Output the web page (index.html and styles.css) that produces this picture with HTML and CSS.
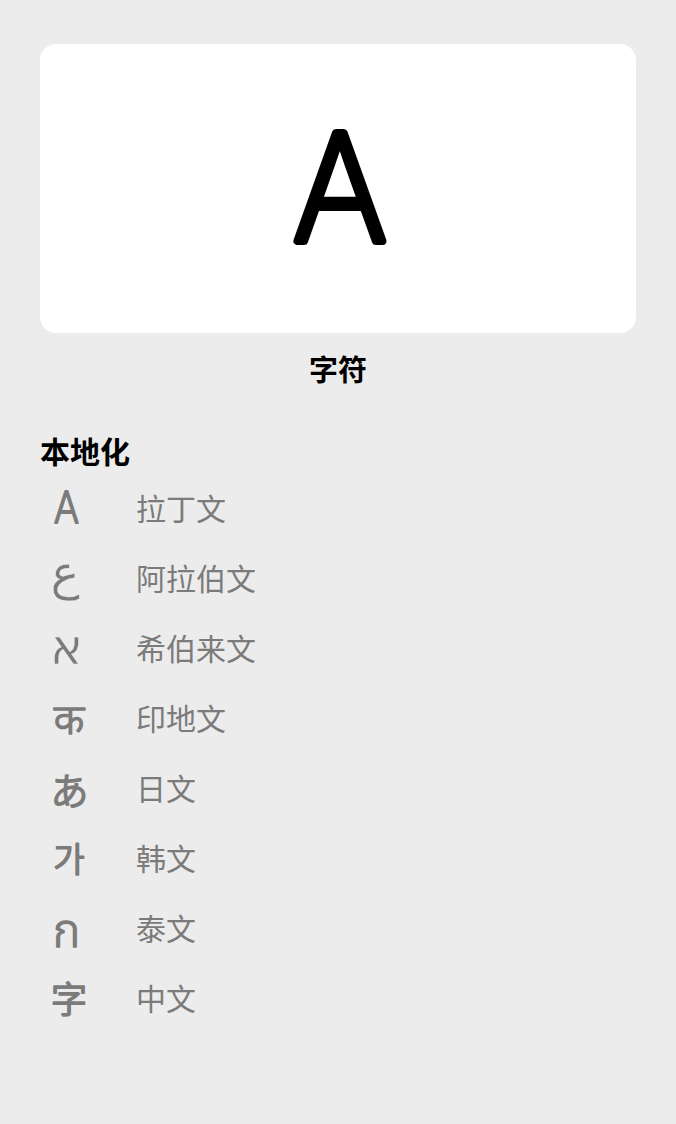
FILE: index.html
```html
<!DOCTYPE html>
<html lang="zh">
<head>
<meta charset="utf-8">
<link rel="stylesheet" href="styles.css">
</head>
<body>
<div class="page">
  <div class="card">
    <svg class="big" width="596" height="289" viewBox="0 0 596 289">
      <text transform="translate(300 196.5) scale(0.96 1)" text-anchor="middle" class="bigtext">A</text>
    </svg>
  </div>
  <div class="caption">字符</div>
  <div class="section">本地化</div>
  <ul class="list">
    <li class="row"><span class="ico"><svg width="52" height="60" viewBox="0 0 52 60"><text transform="translate(26.5 46) scale(0.86 1)" text-anchor="middle" class="g g-lat">A</text></svg></span><span class="label">拉丁文</span></li>
    <li class="row"><span class="ico"><svg width="52" height="60" viewBox="0 0 52 60"><text x="25" y="42" text-anchor="middle" class="g g-ar">ع</text></svg></span><span class="label">阿拉伯文</span></li>
    <li class="row"><span class="ico"><svg width="52" height="60" viewBox="0 0 52 60"><text x="26.5" y="47" text-anchor="middle" class="g g-he">א</text></svg></span><span class="label">希伯来文</span></li>
    <li class="row"><span class="ico"><svg width="52" height="60" viewBox="0 0 52 60"><text x="29" y="47" text-anchor="middle" class="g g-hi">क</text></svg></span><span class="label">印地文</span></li>
    <li class="row"><span class="ico"><svg width="52" height="60" viewBox="0 0 52 60"><text x="29.5" y="48" text-anchor="middle" class="g g-ja">あ</text></svg></span><span class="label">日文</span></li>
    <li class="row"><span class="ico"><svg width="52" height="60" viewBox="0 0 52 60"><text x="29" y="44.5" text-anchor="middle" class="g g-ko">가</text></svg></span><span class="label">韩文</span></li>
    <li class="row"><span class="ico"><svg width="52" height="60" viewBox="0 0 52 60"><text x="26.5" y="50" text-anchor="middle" class="g g-th">ก</text></svg></span><span class="label">泰文</span></li>
    <li class="row"><span class="ico"><svg width="52" height="60" viewBox="0 0 52 60"><text x="29" y="46.3" text-anchor="middle" class="g g-zh">字</text></svg></span><span class="label">中文</span></li>
  </ul>
</div>
</body>
</html>
```
FILE: styles.css
```css
html, body {
  margin: 0;
  padding: 0;
  background: #ececec;
}
body {
  font-family: "Noto Sans CJK SC", "Noto Sans", sans-serif;
  color: #000;
}
.page {
  padding: 44px 40px 0 40px;
}
.card {
  height: 289px;
  background: #ffffff;
  border-radius: 16px;
}
.big {
  display: block;
}
.bigtext {
  font-family: Inter, "Liberation Sans", sans-serif;
  font-weight: 200;
  font-size: 149px;
  fill: #000;
  stroke: #000;
  stroke-width: 8;
  stroke-linejoin: round;
  stroke-linecap: round;
}
.caption {
  margin-top: 15px;
  height: 40px;
  line-height: 40px;
  text-align: center;
  font-size: 29px;
  font-weight: 600;
}
.section {
  margin-top: 42px;
  height: 40px;
  line-height: 40px;
  font-size: 30px;
  font-weight: 600;
}
.list {
  list-style: none;
  margin: 2px 0 0 0;
  padding: 0;
}
.row {
  height: 70px;
  display: flex;
  align-items: center;
  gap: 44px;
}
.ico {
  width: 52px;
  height: 60px;
  display: block;
}
.ico svg {
  display: block;
  overflow: visible;
}
.label {
  font-size: 30px;
  color: #7b7b7b;
  line-height: 40px;
}
.g {
  fill: #7b7b7b;
  stroke: #7b7b7b;
  stroke-linejoin: round;
  stroke-linecap: round;
}
.g-lat {
  font-family: Inter, "Liberation Sans", sans-serif;
  font-size: 44px;
  font-weight: 200;
  stroke-width: 2.2;
}
.g-ar {
  font-family: "DejaVu Sans", sans-serif;
  font-size: 49px;
  font-weight: 400;
  stroke: #ececec;
  stroke-width: 0.5;
}
.g-he {
  font-family: "DejaVu Sans", sans-serif;
  font-size: 50px;
  font-weight: 400;
  stroke: #ececec;
  stroke-width: 0.6;
}
.g-hi {
  font-family: "Noto Sans Devanagari", "Noto Sans", sans-serif;
  font-size: 42px;
  font-weight: 300;
  stroke-width: 1.4;
}
.g-ja {
  font-family: "Noto Sans CJK JP", sans-serif;
  font-size: 38px;
  font-weight: 300;
  stroke-width: 1.9;
}
.g-ko {
  font-family: "Noto Sans CJK KR", sans-serif;
  font-size: 34px;
  font-weight: 300;
  stroke-width: 2;
}
.g-th {
  font-family: "Noto Sans Thai", "DejaVu Sans", sans-serif;
  font-size: 46px;
  font-weight: 300;
  stroke-width: 1.4;
}
.g-zh {
  font-family: "Noto Sans CJK SC", sans-serif;
  font-size: 36px;
  font-weight: 300;
  stroke-width: 2;
}
```
